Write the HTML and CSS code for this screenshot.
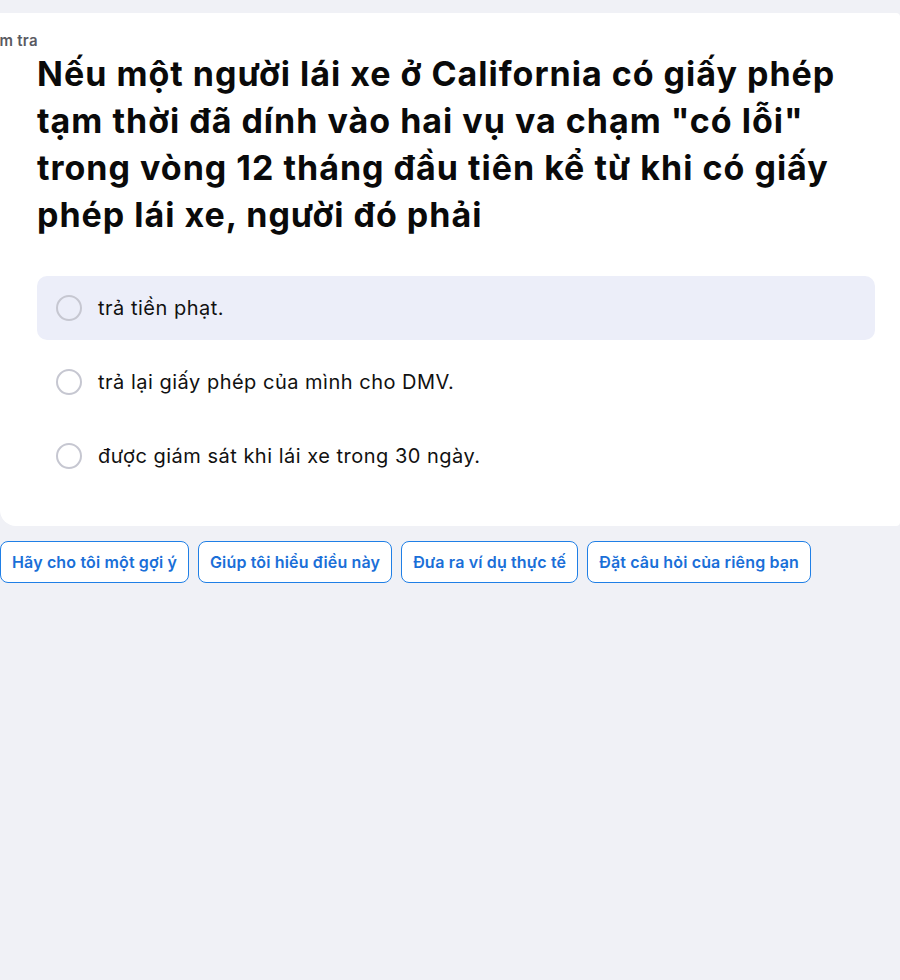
FILE: index.html
```html
<!DOCTYPE html>
<html lang="vi">
<head>
<meta charset="utf-8">
<link rel="stylesheet" href="styles.css">
</head>
<body>
<main class="page">
  <section class="card">
    <div class="label">Kiểm tra</div>
    <h1 class="question">Nếu một người lái xe ở California có giấy phép tạm thời đã dính vào hai vụ va chạm "có lỗi" trong vòng 12 tháng đầu tiên kể từ khi có giấy phép lái xe, người đó phải</h1>
    <div class="options">
      <div class="option option-hover"><span class="radio"></span><span class="option-text">trả tiền phạt.</span></div>
      <div class="option"><span class="radio"></span><span class="option-text">trả lại giấy phép của mình cho DMV.</span></div>
      <div class="option"><span class="radio"></span><span class="option-text">được giám sát khi lái xe trong 30 ngày.</span></div>
    </div>
  </section>
  <div class="actions">
    <button class="chip">Hãy cho tôi một gợi ý</button>
    <button class="chip">Giúp tôi hiểu điều này</button>
    <button class="chip">Đưa ra ví dụ thực tế</button>
    <button class="chip">Đặt câu hỏi của riêng bạn</button>
  </div>
</main>
</body>
</html>
```

FILE: styles.css
```css
* { box-sizing: border-box; }
html, body { margin: 0; padding: 0; }
body {
  background: #f0f1f6;
  font-family: "Inter", "Lato", "Liberation Sans", sans-serif;
  color: #111;
  width: 900px;
  height: 980px;
  overflow: hidden;
}
.page { padding-top: 13px; }
.card {
  background: #fff;
  width: 900px;
  border-radius: 0 4px 4px 16px;
  padding: 20px 25px 38px 37px;
}
.label {
  margin-left: -62px;
  font-size: 15px;
  letter-spacing: 0.3px;
  font-weight: 600;
  color: #5a5a62;
  line-height: 16px;
}
.question {
  margin: 1px 0 0 0;
  font-size: 34px;
  line-height: 47px;
  letter-spacing: 1px;
  font-weight: 700;
  color: #0a0a0a;
}
.options {
  margin-top: 38px;
  display: flex;
  flex-direction: column;
  gap: 10px;
}
.option {
  height: 64px;
  border-radius: 10px;
  display: flex;
  align-items: center;
  padding-left: 19px;
  gap: 16px;
}
.option-hover { background: #eceef9; }
.radio {
  width: 26px;
  height: 26px;
  border-radius: 50%;
  border: 2px solid #c6c7d1;
  background: #fff;
  flex: none;
}
.option-hover .radio { background: transparent; }
.option-text {
  font-size: 20px;
  letter-spacing: 0.5px;
  color: #111;
}
.actions {
  display: flex;
  gap: 9px;
  margin-top: 15px;
}
.chip {
  height: 42px;
  border: 1px solid #1f7fe6;
  border-radius: 8px;
  background: #fff;
  color: #1a6fd8;
  font-family: inherit;
  font-size: 16px;
  letter-spacing: 0.15px;
  font-weight: 600;
  padding: 0 11px;
}
```
